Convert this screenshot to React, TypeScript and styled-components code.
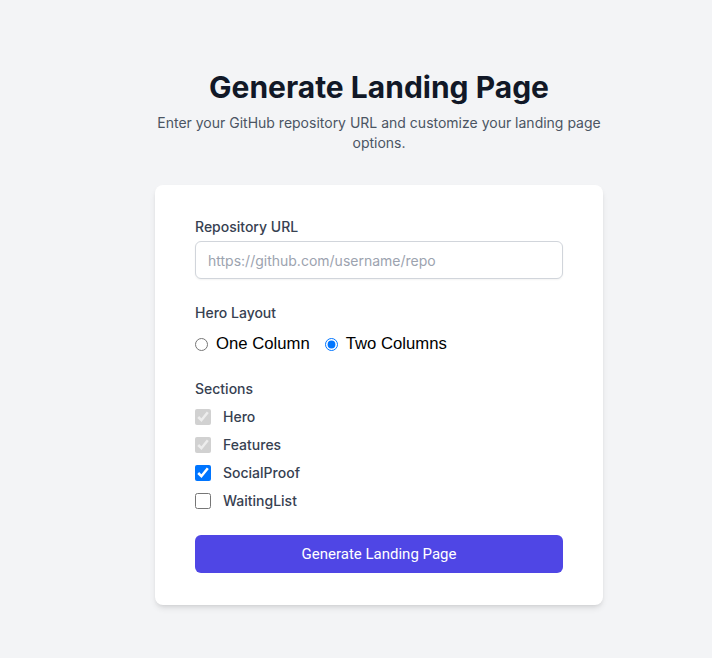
import React, { useState } from "react";
import styled, { createGlobalStyle } from "styled-components";

const GlobalStyle = createGlobalStyle`
  * { box-sizing: border-box; }
  html, body { margin: 0; padding: 0; }
  body {
    background: #f3f4f6;
    font-family: Inter, "Noto Sans", sans-serif;
    color: #111827;
  }
`;

const Page = styled.main`
  min-height: 658px;
  display: flex;
  flex-direction: column;
  align-items: center;
  padding: 69px 0 0 46px;
`;

const Container = styled.div`
  width: 448px;
  display: flex;
  flex-direction: column;
`;

const Title = styled.h1`
  margin: 0;
  font-size: 30px;
  line-height: 36px;
  font-weight: 700;
  text-align: center;
  color: #111827;
`;

const Subtitle = styled.p`
  margin: 8px 0 32px;
  font-size: 14px;
  line-height: 20px;
  text-align: center;
  color: #4b5563;
`;

const Card = styled.form`
  background: #ffffff;
  border-radius: 8px;
  box-shadow: 0 4px 6px -1px rgba(0, 0, 0, 0.1), 0 2px 4px -2px rgba(0, 0, 0, 0.1);
  padding: 32px 40px;
  display: flex;
  flex-direction: column;
  gap: 24px;
`;

const Field = styled.div`
  display: flex;
  flex-direction: column;
`;

const Label = styled.label<{ $gap?: number }>`
  font-size: 14px;
  line-height: 20px;
  font-weight: 500;
  color: #374151;
  margin-bottom: ${(p) => p.$gap ?? 8}px;
`;

const TextInput = styled.input`
  width: 100%;
  height: 38px;
  padding: 8px 12px;
  font-family: Inter, sans-serif;
  font-size: 14px;
  line-height: 20px;
  color: #111827;
  border: 1px solid #d1d5db;
  border-radius: 6px;
  box-shadow: 0 1px 2px 0 rgba(0, 0, 0, 0.05);
  outline: none;
  &::placeholder { color: #9ca3af; }
`;

const RadioRow = styled.div`
  display: flex;
  align-items: center;
  gap: 15px;
  height: 24px;
  padding-top: 2px;
`;

const RadioOption = styled.label`
  display: flex;
  align-items: center;
  gap: 8px;
  font-family: "Liberation Sans", Arial, sans-serif;
  font-size: 16.7px;
  color: #000000;
`;

const Radio = styled.input`
  margin: 0;
  width: 13px;
  height: 13px;
`;

const CheckList = styled.div`
  display: flex;
  flex-direction: column;
  gap: 8px;
`;

const CheckOption = styled.label`
  display: flex;
  align-items: center;
  gap: 12px;
  height: 20px;
  font-size: 14px;
  line-height: 20px;
  font-weight: 500;
  color: #374151;
`;

const Checkbox = styled.input`
  margin: 0;
  width: 16px;
  height: 16px;
`;

const Button = styled.button`
  height: 38px;
  width: 100%;
  border: none;
  border-radius: 6px;
  background: #4f46e5;
  color: #ffffff;
  font-family: Roboto, Inter, sans-serif;
  font-size: 15px;
  font-weight: 400;
  cursor: pointer;
`;

const sections = [
  { name: "Hero", checked: true, disabled: true },
  { name: "Features", checked: true, disabled: true },
  { name: "SocialProof", checked: true, disabled: false },
  { name: "WaitingList", checked: false, disabled: false },
];

export default function App() {
  const [layout, setLayout] = useState("two");
  const [checks, setChecks] = useState(sections.map((s) => s.checked));

  return (
    <>
      <GlobalStyle />
      <Page>
        <Container>
          <Title>Generate Landing Page</Title>
          <Subtitle>
            Enter your GitHub repository URL and customize your landing page options.
          </Subtitle>
          <Card onSubmit={(e) => e.preventDefault()}>
            <Field>
              <Label $gap={4} htmlFor="repo">Repository URL</Label>
              <TextInput id="repo" type="text" placeholder="https://github.com/username/repo" />
            </Field>
            <Field>
              <Label>Hero Layout</Label>
              <RadioRow>
                <RadioOption>
                  <Radio
                    type="radio"
                    name="layout"
                    checked={layout === "one"}
                    onChange={() => setLayout("one")}
                  />
                  One Column
                </RadioOption>
                <RadioOption>
                  <Radio
                    type="radio"
                    name="layout"
                    checked={layout === "two"}
                    onChange={() => setLayout("two")}
                  />
                  Two Columns
                </RadioOption>
              </RadioRow>
            </Field>
            <Field>
              <Label>Sections</Label>
              <CheckList>
                {sections.map((s, i) => (
                  <CheckOption key={s.name}>
                    <Checkbox
                      type="checkbox"
                      checked={checks[i]}
                      disabled={s.disabled}
                      onChange={() =>
                        setChecks((c) => c.map((v, j) => (j === i ? !v : v)))
                      }
                    />
                    {s.name}
                  </CheckOption>
                ))}
              </CheckList>
            </Field>
            <Button type="submit">Generate Landing Page</Button>
          </Card>
        </Container>
      </Page>
    </>
  );
}
